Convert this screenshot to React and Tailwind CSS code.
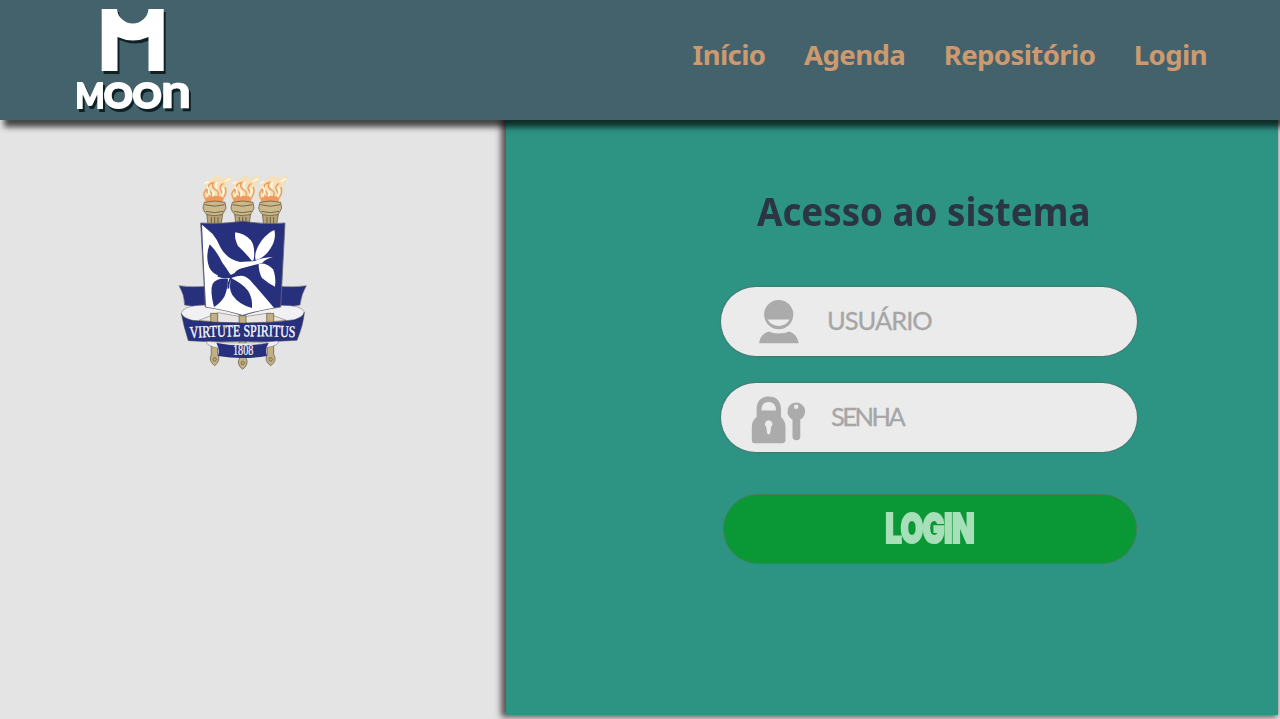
import React from "react";

function MoonLogo() {
  return (
    <svg width="130" height="112" viewBox="70 4 130 112" role="img" aria-label="Moon" className="shrink-0 overflow-visible [filter:drop-shadow(2px_3px_0.6px_#0e2226)]">
      <path d="M101.700 9H117A15.800 15.800 0 0 0 148.500 9H163.700V71H148.500V37Q133 44 117.500 37V71H101.700Z" fill="#fff" />
      <g fill="#fff" stroke="#fff" fontFamily="Lato, sans-serif" fontWeight="900">
        <text x="75.500" y="107.500" fontSize="35" strokeWidth="1.800" textLength="29" lengthAdjust="spacingAndGlyphs">M</text>
        <text x="104" y="107.500" fontSize="35" strokeWidth="2.200" textLength="57.500" lengthAdjust="spacingAndGlyphs">OO</text>
        <text x="160.500" y="108" fontSize="48" strokeWidth="0.500" textLength="31" lengthAdjust="spacingAndGlyphs">n</text>
      </g>
    </svg>
  );
}

function Torch({ x }) {
  return (
    <g transform={`translate(${x} 0)`}>
      <path d="M-33 105Q-42 78-27 68Q-36 45-10 45Q0 26 22 38Q35 42 52 28Q47 55 38 66Q36 88 25 105Q-5 122-33 105Z" fill="#f9dfae" opacity=".8" />
      <path d="M-30 100Q-5 85 28 98L24 111H-27Z" fill="#ef9a5c" />
      <path d="M-28 100Q-40 83-20 70Q-28 84-13 96M-15 101Q-2 86-17 76Q-25 57-3 52Q-12 67 4 75Q19 83 5 101M10 99Q28 91 20 78Q10 66 26 55M27 98Q39 80 31 66" fill="none" stroke="#e99a5c" strokeWidth="4" />
      <path d="M-22 92Q-12 77-23 65M-7 94Q2 85-8 78M7 69Q-2 62 9 51M19 94Q31 82 24 69M-30 55l12-5M32 49l14-8" fill="none" stroke="#fff9df" strokeWidth="5" />
      <path d="M-24 147H24L19 179H-20Z" fill="#b9a577" stroke="#554b39" strokeWidth="2" />
      <path d="M-10 156V178M0 156V178M10 156V178" stroke="#6b5e43" strokeWidth="3" />
      <path d="M-31 112Q0 104 31 112L34 129Q29 142 22 149Q0 155-23 149Q-33 141-35 129Z" fill="#cbb98c" stroke="#554b39" strokeWidth="2" />
      <path d="M-30 119Q0 128 30 119M-27 139Q0 147 27 139" fill="none" stroke="#776747" strokeWidth="3" />
    </g>
  );
}

function Crest() {
  return (
    <svg width="150" height="210" viewBox="0 0 450 630" role="img" aria-label="Brasão">
      <Torch x={134} />
      <Torch x={218} />
      <Torch x={301} />
      <g stroke="#6a6674" strokeWidth="1.500">
        <path d="M27 362Q65 368 108 364V430L44 420Q43 388 27 362Z" fill="#26307d" />
        <path d="M409 362Q372 368 325 364V430L390 420Q394 388 409 362Z" fill="#26307d" />
        <path d="M106 420Q38 421 34 445Q38 460 67 476Q140 488 218 488Q303 488 373 472Q404 458 402 440Q396 420 328 421Z" fill="#f1f1f4" />
      </g>
      <path d="M87 466L145 443L218 456L290 445L349 466Q218 482 87 466Z" fill="#e8e7e6" stroke="#6a6050" strokeWidth="1.500" />
      <g fill="#c2af82" stroke="#5b503d" strokeWidth="2">
        <path d="M122 445H143V568Q153 588 134 602Q114 588 124 568Z" />
        <path d="M207 452H228V578Q238 598 218 613Q198 598 209 578Z" />
        <path d="M290 445H311V568Q323 588 302 602Q281 588 292 568Z" />
        <circle cx="134" cy="583" r="5" />
        <circle cx="218" cy="594" r="5" />
        <circle cx="302" cy="583" r="5" />
      </g>
      <path d="M92 174Q160 178 218 168Q278 179 345 174L332 426Q262 436 218 452Q174 436 106 426Z" fill="#26307d" stroke="#6a6674" strokeWidth="2.500" />
      <path d="M96 179L128 207Q142 224 152 248Q171 283 210 291Q233 289 260 289Q225 302 202 316Q187 327 200 334Q222 327 240 345L312 428Q258 437 218 450Q178 437 108 425Q101 300 96 179Z" fill="#fff" />
      <g fill="#fff">
        <path d="M246 288Q225 262 204 243Q192 218 196 202Q224 206 242 225Q257 245 251 285Z" />
        <path d="M257 285Q250 262 276 225Q292 205 313 195Q320 222 301 251Q281 281 257 285Z" />
        <path d="M266 296Q290 292 309 313Q319 336 315 365Q293 354 276 339Q265 318 266 296Z" />
        <path d="M180 316Q213 289 249 290Q273 277 309 276Q289 281 277 293Q226 308 180 318Z" />
      </g>
      <g fill="#26307d">
        <path d="M119 238Q108 265 114 295Q119 321 140 329Q165 335 184 333Q168 308 156 292Q142 261 119 238Z" />
        <path d="M174 341Q140 338 128 356Q119 376 132 426Q150 415 163 395Q174 370 174 341Z" />
        <path d="M184 340Q174 370 187 390Q208 420 246 429Q248 398 234 377Q217 356 184 340Z" />
        <path d="M143 323Q166 336 187 328Q218 308 263 300Q230 313 202 333Q173 345 143 335Z" />
        <path d="M184 336Q174 353 175 371" stroke="#26307d" strokeWidth="5" fill="none" />
      </g>
      <path d="M34 446Q39 458 67 466Q140 474 218 474Q303 474 373 464Q400 456 403 442Q401 475 381 526Q304 532 218 529Q129 532 55 527Q41 484 34 446Z" fill="#26307d" stroke="#4e4a59" strokeWidth="1.500" />
      <path d="M112 529Q102 540 145 550L143 535Q214 550 292 534L289 548Q333 540 323 528Q222 540 112 529Z" fill="#eeeef0" stroke="#6a6674" strokeWidth="1.500" />
      <path d="M139 534Q216 549 296 534Q284 550 291 573Q217 585 144 573Q151 552 139 534Z" fill="#26307d" />
      <path id="motto-curve" d="M60 519Q218 509 380 517" fill="none" />
      <text fill="#fff" fontFamily="Liberation Serif, serif" fontSize="50" stroke="#fff" strokeWidth="1">
        <textPath href="#motto-curve" textLength="316" lengthAdjust="spacingAndGlyphs">VIRTUTE SPIRITUS</textPath>
      </text>
      <text x="189" y="570" fill="#fff" fontFamily="Liberation Serif, serif" fontSize="41" stroke="#fff" strokeWidth=".6" textLength="61" lengthAdjust="spacingAndGlyphs">1808</text>
    </svg>
  );
}

function UserIcon() {
  return (
    <svg width="42" height="46" viewBox="0 0 42 46" fill="#ababab" aria-hidden="true">
      <path fillRule="evenodd" d="M20.700 1a14.600 14.600 0 1 0 0 29.200a14.600 14.600 0 0 0 0-29.200ZM9.500 20.500H31.700Q28 27 20.700 27Q13.300 27 9.500 20.500Z" />
      <path d="M1 44.300Q2.500 35 10.500 32.500Q15 34.500 20.700 34.500Q27 34.500 31.500 32.500Q39 35 40.700 44.300Z" />
    </svg>
  );
}

function LockIcon() {
  return (
    <svg width="56" height="48" viewBox="0 0 56 48" fill="#ababab" aria-hidden="true" className="mt-1">
      <path fillRule="evenodd" d="M5.600 21V13.500C5.600 5 10.300.5 17.700.5S30 5 30 13.500V21Q34.500 25 34.500 31V43.500Q34.500 47.300 31 47.300H4Q.8 47.300.8 44V31Q.8 25 5.600 21ZM10.500 14.500H25Q25 6 17.700 6T10.500 14.500Z" />
      <path d="M17.700 24.300A3.900 3.900 0 0 1 20 31.300L19.500 36Q19 38.500 17.700 38.500T15.800 36L15.300 31.300A3.900 3.900 0 0 1 17.700 24.300Z" fill="#ebebeb" />
      <path fillRule="evenodd" d="M45.200 6.500A9 9 0 0 1 49.300 23.500V40.500Q49.300 44.200 45.500 44.200Q41.500 44.200 41.500 40.500V23.500A9 9 0 0 1 45.200 6.500ZM45.200 8.500a2.300 2.300 0 1 0 0 4.600a2.300 2.300 0 0 0 0-4.600Z" />
    </svg>
  );
}

const fieldClass =
  "flex h-[69px] w-[416px] items-center rounded-full bg-[#ebebeb] shadow-[0_0_1px_1px_rgba(90,100,100,0.55)]";
const inputClass =
  "mb-[4px] h-[60px] w-[260px] bg-transparent font-[Lato,sans-serif] text-[25.500px] text-[#a6a6a6] outline-none [-webkit-text-stroke:0.300px_#a6a6a6] placeholder:text-[#a6a6a6] placeholder:opacity-100";

export default function App() {
  return (
    <div className="flex h-[719px] w-[1280px] flex-col overflow-hidden bg-[#e4e4e4]">
      <header className="relative z-10 flex h-[120px] shrink-0 items-start justify-between bg-[#44626c] pt-1 pl-[70px] pr-[73px] shadow-[4px_7px_6px_rgba(0,0,0,0.7)]">
        <MoonLogo />
        <nav className="flex gap-[38.500px] pt-[30px] font-['Noto_Sans',sans-serif] text-[27.600px] leading-[40px] font-bold tracking-[-0.620px] text-[#cd9a70]">
          <a href="#inicio">Início</a>
          <a href="#agenda">Agenda</a>
          <a href="#repositorio">Repositório</a>
          <a href="#login">Login</a>
        </nav>
      </header>
      <div className="flex min-h-0 flex-1">
        <aside className="w-[506px] shrink-0 pt-[45px] pl-[170px]">
          <Crest />
        </aside>
        <main className="flex h-[595px] w-[772px] flex-col items-start bg-[#2d9383] pl-[215px] shadow-[-3px_0_6px_2px_rgba(50,30,35,0.75)]">
          <h1 className="mt-[63px] ml-[36px] origin-left scale-x-[0.941] whitespace-nowrap font-['Noto_Sans',sans-serif] text-[39px] leading-[56px] font-bold text-[#2c3543]">Acesso ao sistema</h1>
          <form className="mt-[48px] flex flex-col" onSubmit={(e) => e.preventDefault()}>
            <label className={`${fieldClass} pl-[37px]`}>
              <UserIcon />
              <input className={`${inputClass} ml-[27px] tracking-[-1px]`} placeholder="USUÁRIO" aria-label="Usuário" />
            </label>
            <label className={`${fieldClass} mt-[27px] pl-[30px]`}>
              <LockIcon />
              <input type="password" className={`${inputClass} ml-[24px] tracking-[-2.500px]`} placeholder="SENHA" aria-label="Senha" />
            </label>
            <button className="mt-[42px] ml-[2px] flex h-[70px] w-[414px] items-center justify-center rounded-full border border-[#417f55] bg-[#0a9837] font-[Inter,sans-serif] text-[41px] font-black text-[#a7dfb9]">
              <span className="inline-block scale-x-[0.72] tracking-[-1px] [-webkit-text-stroke:2px_#a7dfb9]">LOGIN</span>
            </button>
          </form>
        </main>
      </div>
    </div>
  );
}
